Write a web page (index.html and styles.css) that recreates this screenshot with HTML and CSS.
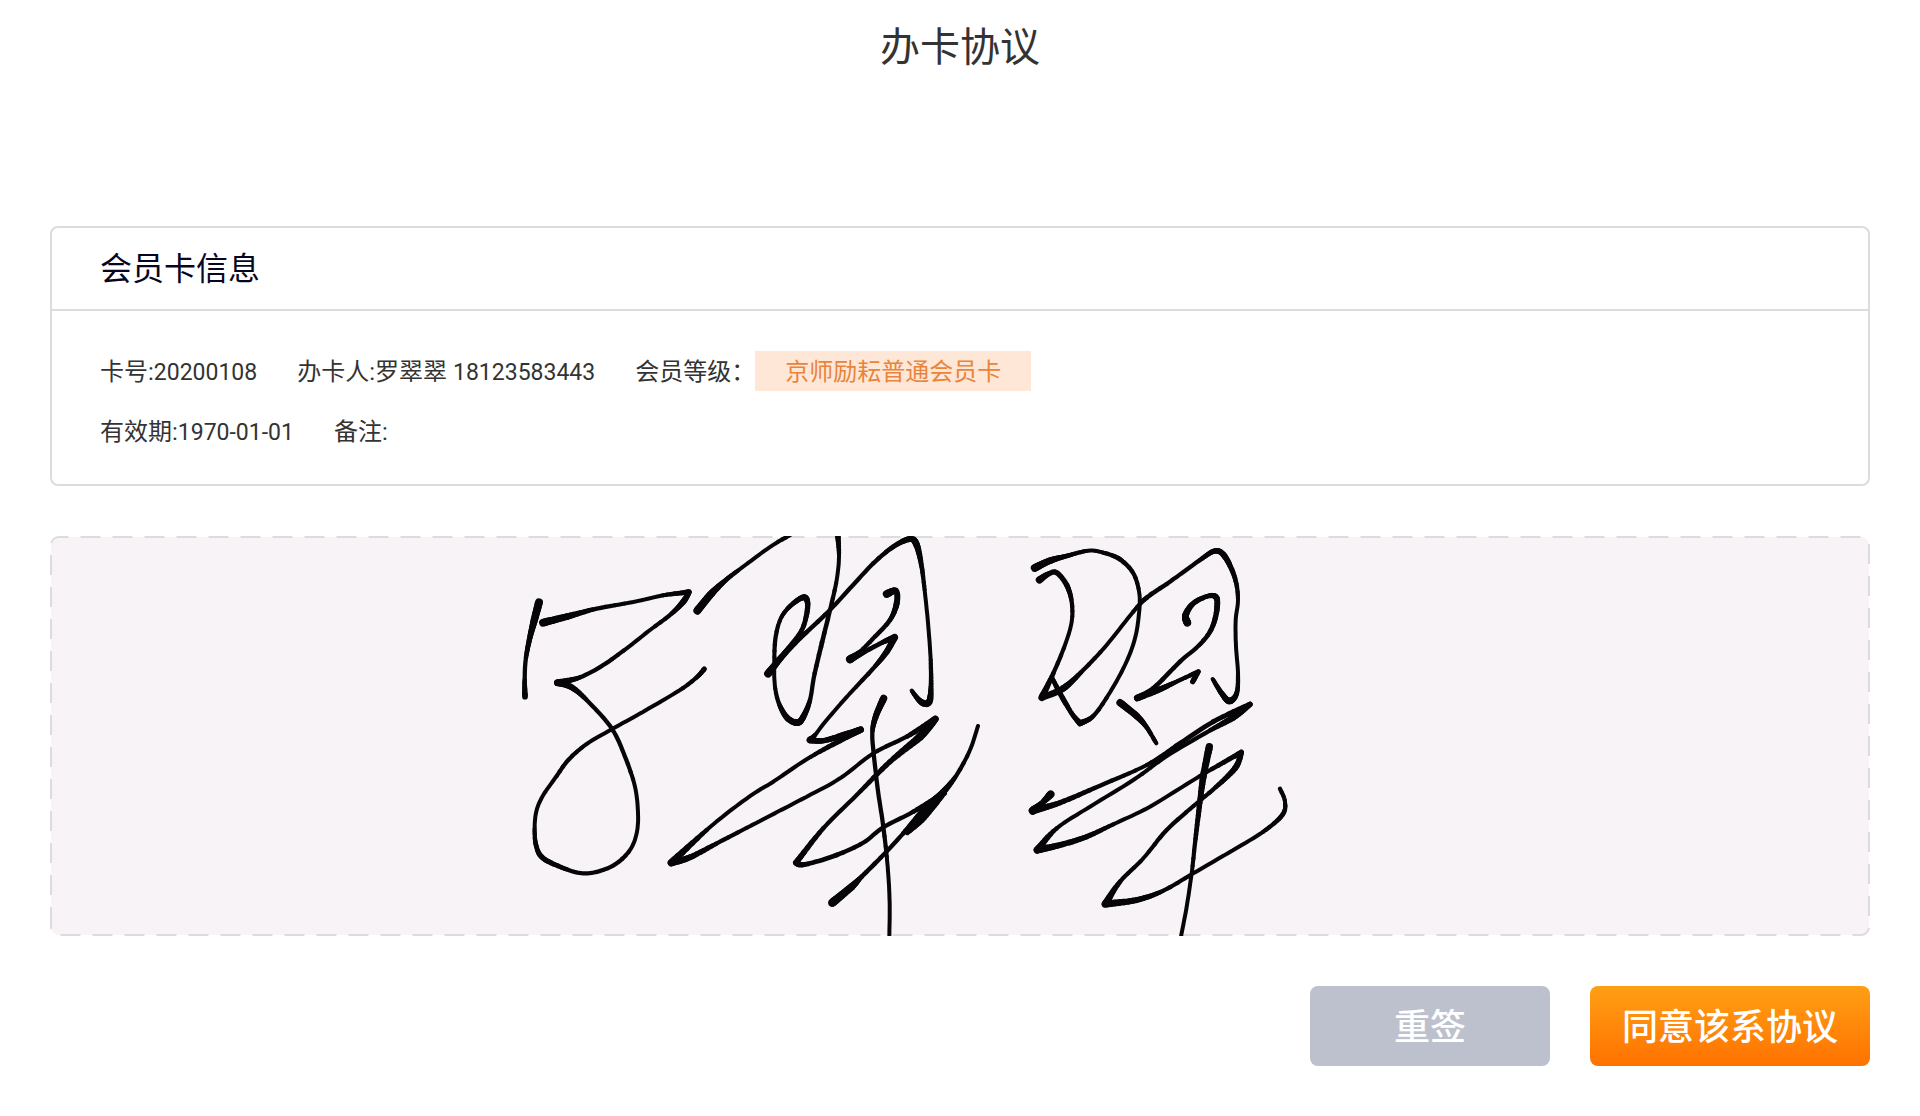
FILE: index.html
```html
<!DOCTYPE html>
<html lang="zh-CN">
<head>
<meta charset="utf-8">
<meta name="viewport" content="width=device-width, initial-scale=1">
<title>办卡协议</title>
<link rel="stylesheet" href="styles.css">
</head>
<body>
<main class="page">
  <h1 class="page-title">办卡协议</h1>

  <section class="card">
    <h2 class="card-title">会员卡信息</h2>
    <div class="card-body">
      <div class="row">
        <span class="field">卡号:<span class="number">20200108</span></span>
        <span class="field">办卡人:罗翠翠 <span class="number">18123583443</span></span>
        <span class="level"><span class="field">会员等级：</span><span class="field badge">京师励耘普通会员卡</span></span>
      </div>
      <div class="row">
        <span class="field">有效期:<span class="number">1970-01-01</span></span>
        <span class="field">备注:</span>
      </div>
    </div>
  </section>

  <svg class="sign-pad" viewBox="0 0 1820 400" role="img" aria-label="签名">
    <path class="sign-frame" d="M1 391V9A8 8 0 0 1 9 1H1811A8 8 0 0 1 1819 9V391A8 8 0 0 1 1811 399H9A8 8 0 0 1 1 391Z"/>
    <g class="ink" id="ink"></g>
  </svg>

  <div class="actions">
    <button class="btn btn-reset" type="button">重签</button>
    <button class="btn btn-agree" type="button">同意该系协议</button>
  </div>
</main>
<script src="signature.js"></script>
</body>
</html>
```

FILE: styles.css
```css
* {
  box-sizing: border-box;
}

body {
  margin: 0;
  background: #fff;
  color: #333;
  font-family: Roboto, "Noto Sans CJK SC", sans-serif;
  font-size: 24px;
  line-height: 38px;
}

.page {
  padding: 18px 50px 50px;
}

.page-title {
  margin: 0 0 148px;
  font-size: 40px;
  font-weight: 400;
  line-height: 60px;
  text-align: center;
}

.card {
  border: 2px solid #dcdcdc;
  border-radius: 8px;
}

.card-title {
  margin: 0;
  padding: 2px 48px 0;
  border-bottom: 2px solid #dcdcdc;
  color: #060622;
  font-size: 32px;
  font-weight: 400;
  line-height: 79px;
}

.card-body {
  display: flex;
  flex-direction: column;
  gap: 20px;
  padding: 40px 48px 33px;
}

.row {
  display: flex;
  flex-wrap: wrap;
  column-gap: 40px;
}

.field {
  height: 40px;
  padding-top: 2px;
}

.number {
  font-size: 23px;
}

.level {
  display: flex;
}

.badge {
  padding-right: 30px;
  padding-left: 30px;
  background: #fee7d6;
  color: #e9843c;
}

.sign-pad {
  display: block;
  width: 100%;
  height: auto;
  margin: 50px 0;
}

.sign-frame {
  fill: #f7f3f7;
  stroke: #dcdbdf;
  stroke-width: 2;
  stroke-dasharray: 20 12;
}

.ink {
  fill: none;
  stroke: #060608;
  stroke-linecap: round;
  stroke-linejoin: round;
}

.actions {
  display: flex;
  justify-content: flex-end;
  gap: 40px;
}

.btn {
  height: 80px;
  padding: 4px 0 0;
  border: 0;
  border-radius: 8px;
  color: #fff;
  font: inherit;
  font-size: 36px;
  font-weight: 500;
}

.btn-reset {
  width: 240px;
  background: #bdc1ce;
}

.btn-agree {
  width: 280px;
  background: linear-gradient(#ff9f15, #ff7200);
}
```

FILE: signature.js
```js
// Pen strokes, one list per character: "x,y,width" points in thirds of a pixel.
// "/" marks a sharp turn, where the pen changes direction without lifting.
const characters = [
  { x: 450, y: -16, strokes: [
    "117,247,24 103,300,22 88,360,16 77,420,13 74,480,13 75,530,17",
    "129,308,24 200,290,20 290,266,13 400,246,12 490,226,12 567,216,16 / 550,245,18 510,285,13 450,330,12 380,385,12 310,435,13 240,472,13 172,488,20 / 215,502,18 265,545,13 335,625,13 375,710,13 405,800,12 414,880,12 410,940,12 390,990,12 350,1030,13 300,1053,13 250,1060,13 200,1048,13 130,1015,16 108,975,14 104,920,12 110,870,12 130,825,12 165,775,12 205,720,13 260,672,12 335,628,12 430,575,12 540,510,12 590,472,13 613,447,15"
  ]},
  { x: 690, y: -16, strokes: [
    "-128,272,24 -85,220,22 -40,178,14 0,147,12 70,95,12 110,68,12 150,45,13",
    "293,40,18 297,110,12 290,180,12 270,270,13 243,380,14 222,470,13 210,540,13 190,590,18 172,608,20 140,592,18 115,545,13 104,490,12 103,420,12 107,350,13 125,290,12 160,250,14 194,232,18 203,260,16 190,320,14 165,360,13 130,405,18",
    "84,461,24 130,405,18 180,355,14 265,275,13 330,205,13 400,130,13 460,80,14 510,57,18 530,75,20 545,140,14 555,220,12 565,320,12 572,420,12 573,500,14 568,545,20 552,550,20 535,538,16 515,512,12",
    "440,222,24 468,213,18 470,250,18 450,300,14 400,355,13 360,395,12 330,418,24 / 380,392,14 430,366,14 464,352,20 / 440,395,18 400,445,13 330,520,12 260,600,12 225,645,12 210,660,20 / 250,662,16 310,645,18 362,629,20 / 300,662,16 200,718,12 100,785,12 50,815,12 -20,865,12 -100,930,12 -206,1028,22 / -150,1012,18 -60,965,13 50,908,12 200,830,12 300,775,12 400,700,12 500,650,13 586,597,20 / 540,650,24 450,725,16 350,825,13 250,925,13 168,1028,18 / 180,1034,16 210,1030,14 290,1005,14 370,968,13 430,922,13 520,875,13 612,820,18",
    "431,535,22 407,590,18 397,640,13 402,710,13 415,820,13 430,920,13 443,1040,12 449,1150,12 448,1250,12",
    "277,1148,26 335,1100,22 365,1070,14 430,1005,13 490,940,13 540,885,20 575,850,26 608,818,20 650,765,13 690,690,12 714,618,12",
    "502,938,14 550,892,22 606,826,18"
  ]},
  { x: 950, y: -16, strokes: [
    "104,144,24 150,122,20 200,108,14 265,92,12 310,98,12 360,118,14 400,160,13 418,220,12 417,280,12 405,355,12 375,435,12 325,525,12 280,588,13 240,610,18 / 215,580,14 180,520,16 157,475,13",
    "118,180,22 145,162,16 170,158,16 200,195,16 215,245,13 215,305,12 195,375,12 160,460,13 125,533,20 / 190,505,20 250,450,13 320,375,12 400,275,12 440,233,14 510,185,13 600,120,13 645,93,16 675,110,18 705,175,14 714,240,12 707,300,12 708,380,12 714,460,12 710,520,14 688,543,20 665,520,16 638,477,12",
    "562,308,24 557,285,20 580,250,16 625,228,14 650,235,18 648,285,16 630,335,14 595,378,13 540,425,13 460,505,14 412,534,20 / 480,508,18 540,480,12 595,455,14 / 578,485,16",
    "360,548,22 410,588,20 440,622,14 469,670,12",
    "152,823,24 125,850,16 98,872,24 / 180,848,16 300,797,13 440,735,12 540,670,14 640,605,14 750,553,16 / 700,592,20 620,637,13 500,708,13 400,780,12 270,860,12 170,925,12 112,990,22 / 180,975,18 260,950,16 350,908,12 450,860,12 600,768,12 724,697,16 / 705,745,18 640,808,13 590,850,12 500,930,13 430,1015,12 360,1085,13 316,1152,22 / 410,1140,18 490,1112,13 580,1060,12 700,990,12 790,935,12 847,885,14 855,845,12 840,806,13",
    "628,680,22 610,770,20 598,860,16 585,970,13 575,1060,12 560,1160,12 543,1250,12"
  ]}
];

const STEPS = 8;
const segmentsByWidth = new Map();

function spline(a, b, c, d, t) {
  return 0.5 * (2 * b + (c - a) * t + (2 * a - 5 * b + 4 * c - d) * t * t
    + (3 * b - a - 3 * c + d) * t * t * t);
}

function addCurve(points, origin) {
  let previous = null;
  for (let i = 0; i < points.length - 1; i++) {
    const a = points[Math.max(i - 1, 0)];
    const b = points[i];
    const c = points[i + 1];
    const d = points[Math.min(i + 2, points.length - 1)];
    for (let s = 0; s <= STEPS; s++) {
      const t = s / STEPS;
      const x = (origin.x + spline(a[0], b[0], c[0], d[0], t) / 3).toFixed(1);
      const y = (origin.y + spline(a[1], b[1], c[1], d[1], t) / 3).toFixed(1);
      const width = ((b[2] + (c[2] - b[2]) * t) / 3).toFixed(1);
      if (previous) {
        const d0 = segmentsByWidth.get(width) || "";
        segmentsByWidth.set(width, d0 + `M${previous}L${x} ${y}`);
      }
      previous = `${x} ${y}`;
    }
  }
}

for (const character of characters) {
  for (const stroke of character.strokes) {
    let corner = [];
    for (const part of stroke.split(" / ")) {
      const points = corner.concat(part.split(" ").map(p => p.split(",").map(Number)));
      addCurve(points, character);
      corner = [points[points.length - 1]];
    }
  }
}

const ink = document.getElementById("ink");
for (const [width, d] of segmentsByWidth) {
  const path = document.createElementNS("http://www.w3.org/2000/svg", "path");
  path.setAttribute("d", d);
  path.setAttribute("stroke-width", width);
  ink.appendChild(path);
}
```
